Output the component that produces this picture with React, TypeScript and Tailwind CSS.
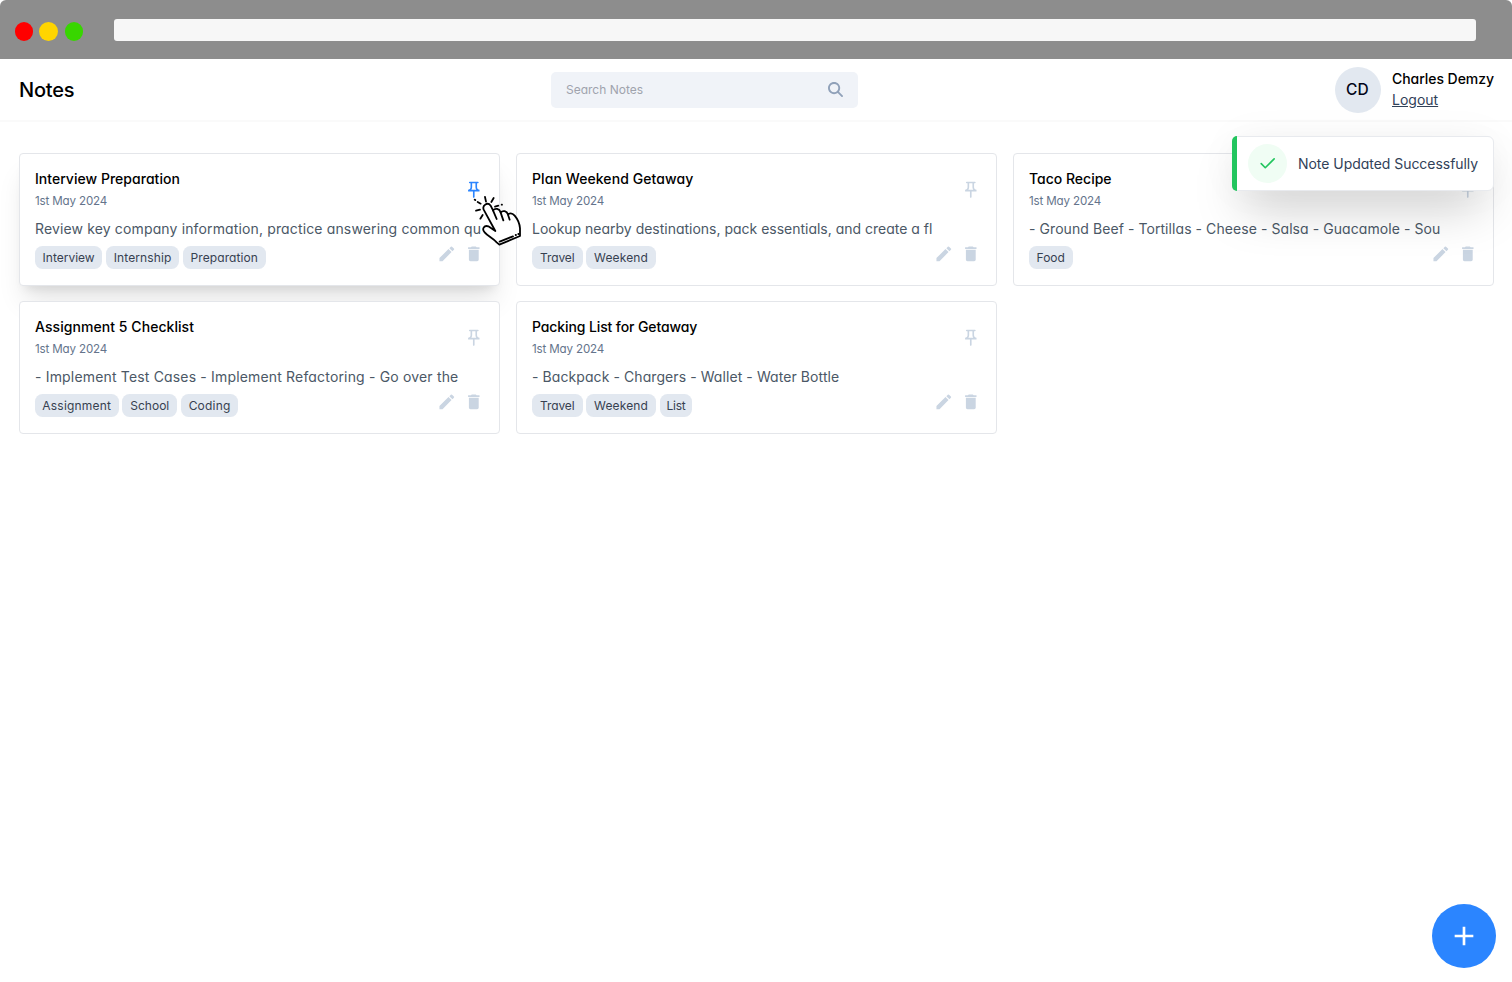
import { MdAdd, MdCreate, MdDelete, MdOutlinePushPin } from "react-icons/md";
import { FaMagnifyingGlass } from "react-icons/fa6";
import { LuCheck } from "react-icons/lu";

type Tag = { label: string; box: string };
type Note = {
  title: string;
  titleTracking: string;
  content: string;
  contentTracking: string;
  tags: Tag[];
  pinned?: boolean;
};

const travel: Tag = { label: "Travel", box: "w-[50.5px] tracking-[-0.1px]" };
const weekend: Tag = { label: "Weekend", box: "w-[69.5px] tracking-[0.15px]" };

const notes: Note[] = [
  {
    title: "Interview Preparation",
    titleTracking: "tracking-[0.03px]",
    content: "Review key company information, practice answering common qu",
    contentTracking: "tracking-[0.14px]",
    pinned: true,
    tags: [
      { label: "Interview", box: "w-[67.3px]" },
      { label: "Internship", box: "w-[73px] tracking-[0.13px]" },
      { label: "Preparation", box: "w-[82.8px] tracking-[0.1px]" },
    ],
  },
  {
    title: "Plan Weekend Getaway",
    titleTracking: "tracking-[0.08px]",
    content: "Lookup nearby destinations, pack essentials, and create a fl",
    contentTracking: "tracking-[-0.01px]",
    tags: [travel, weekend],
  },
  {
    title: "Taco Recipe",
    titleTracking: "tracking-[0px]",
    content: "- Ground Beef - Tortillas - Cheese - Salsa - Guacamole - Sou",
    contentTracking: "tracking-[0.07px]",
    tags: [{ label: "Food", box: "w-[43.5px]" }],
  },
  {
    title: "Assignment 5 Checklist",
    titleTracking: "tracking-[0.06px]",
    content: "- Implement Test Cases - Implement Refactoring - Go over the",
    contentTracking: "tracking-[0.17px]",
    tags: [
      { label: "Assignment", box: "w-[83.5px] tracking-[0.2px]" },
      { label: "School", box: "w-[55px]" },
      { label: "Coding", box: "w-[57px] tracking-[0.2px]" },
    ],
  },
  {
    title: "Packing List for Getaway",
    titleTracking: "tracking-[-0.11px]",
    content: "- Backpack - Chargers - Wallet - Water Bottle",
    contentTracking: "tracking-[0.08px]",
    tags: [travel, weekend, { label: "List", box: "w-[32.7px] tracking-[-0.3px]" }],
  },
];

function NoteCard({ note }: { note: Note }) {
  return (
    <article
      className={`h-[132.5px] rounded border border-[#e4e6ea] bg-white pt-[15px] pl-[15px] ${
        note.pinned
          ? "pr-[15.5px] shadow-[0_20px_25px_-5px_rgba(0,0,0,0.1),0_8px_10px_-6px_rgba(0,0,0,0.1)]"
          : "pr-[15.1px]"
      }`}
    >
      <div className="flex items-center justify-between">
        <div>
          <h6 className={`text-[14px] leading-[20px] font-medium text-black ${note.titleTracking}`}>{note.title}</h6>
          <p className="mt-[3px] text-[11.6px] leading-[18px] tracking-[-0.15px] text-[#64748b]">1st May 2024</p>
        </div>
        <MdOutlinePushPin className={`size-[19.6px] ${note.pinned ? "text-[#2b85ff]" : "text-slate-300"}`} />
      </div>
      <p className={`mt-[9px] text-[14px] leading-[20px] whitespace-nowrap text-[#4b5866] ${note.contentTracking}`}>
        {note.content}
      </p>
      <div className="mt-[7px] flex items-start justify-between">
        <div className="flex gap-[3.8px]">
          {note.tags.map((tag) => (
            <span
              key={tag.label}
              className={`flex h-[23px] items-center justify-center rounded-[7.5px] bg-slate-200 text-[12px] text-[#374151] ${tag.box}`}
            >
              {tag.label}
            </span>
          ))}
        </div>
        <div className="-mt-[2.5px] flex gap-[7.7px] text-slate-300">
          <MdCreate className="size-[19.6px]" />
          <MdDelete className="size-[19.6px]" />
        </div>
      </div>
    </article>
  );
}

function HandCursor() {
  return (
    <svg
      viewBox="0 0 210 225"
      className="pointer-events-none absolute top-[175px] left-[460px] h-[75px] w-[70px]"
      fill="none"
      stroke="#000"
      strokeWidth="5.4"
      strokeLinecap="round"
      strokeLinejoin="round"
    >
      <path
        fill="#fff"
        d="M106 168 L71 104 C66 90 83 80 92 92 L99 106 C106 98 118 101 122 112 C129 105 140 108 144 118 C151 113 159 116 164 122 C176 136 179 148 180 160 L180 183 L118 209 L110 202 C98 189 84 184 74 172 C64 161 73 150 85 154 Z"
      />
      <path d="M99 106 L110 132 M122 113 L130 136 M144 119 L149 134" />
      <path d="M119 200 L159 184 M167 180 L168 180 M175 177 L176 177" />
      <path d="M75 66 L78 80 M101 69 L94 81 M105 95 L115 92 M125 89 L126 89 M48 107 L60 104 M61 131 L68 120 M44 74 L46 75 M53 81 L62 86" />
    </svg>
  );
}

export default function App() {
  return (
    <div className="relative flex h-[982px] w-[1512px] flex-col overflow-hidden bg-white font-['Inter',sans-serif] [font-feature-settings:'cv11']">
      <div className="flex h-[59px] shrink-0 items-start rounded-t-[6px] bg-[#8d8d8d] pl-[14.9px]">
        <div className="mt-[22px] flex">
          <span className="size-[18.6px] rounded-full bg-[#ff0000]" />
          <span className="ml-[5.7px] size-[18.6px] rounded-full bg-[#ffd500]" />
          <span className="ml-[6.9px] size-[18.6px] rounded-full bg-[#38d600]" />
        </div>
        <div className="mt-[18.5px] ml-[30.7px] h-[22px] w-[1362.5px] rounded-[3px] bg-[#f7f7f7]" />
      </div>

      <header className="flex h-[63px] shrink-0 items-center border-b-2 border-[#fafafa] pr-[18px] pl-[19px]">
        <h2 className="w-[532px] text-[20px] font-medium tracking-[-0.2px] text-black">Notes</h2>
        <div className="flex h-[36px] w-[307px] items-center justify-between rounded-[5px] bg-[#f0f3f8] pr-[15px] pl-[15px]">
          <span className="text-[12px] text-[#9fa3ad]">Search Notes</span>
          <FaMagnifyingGlass className="size-[15px] text-slate-400" />
        </div>
        <div className="ml-auto flex items-center gap-[11.5px]">
          <div className="flex size-[46px] items-center justify-center rounded-full bg-slate-200 text-[15.5px] font-medium tracking-[0.3px] text-slate-950">
            CD
          </div>
          <div className="-mt-[2px] w-[102px]">
            <p className="text-[14px] leading-[21px] font-medium tracking-[-0.05px] whitespace-nowrap text-black">
              Charles Demzy
            </p>
            <button className="block text-[14px] leading-[21px] text-slate-700 underline">Logout</button>
          </div>
        </div>
      </header>

      <main className="grid grid-cols-3 gap-x-4 gap-y-[15.5px] pt-[31px] pr-[18px] pl-[19px]">
        {notes.map((note) => (
          <NoteCard key={note.title} note={note} />
        ))}
      </main>

      <div className="absolute top-[136px] left-[1232px] flex h-[55px] w-[262px] items-center rounded-md border border-[#e8eaee] bg-white shadow-[0_25px_50px_-12px_rgba(0,0,0,0.25),0_0_40px_rgba(0,0,0,0.04)]">
        <div className="-ml-px h-[55px] w-[5px] shrink-0 rounded-l-[5px] bg-[#22c55e]" />
        <div className="ml-[11px] flex size-[38.5px] shrink-0 items-center justify-center rounded-full bg-green-50">
          <LuCheck className="size-[19.4px] text-[#22c55e]" />
        </div>
        <p className="ml-[11.5px] text-[14px] tracking-[-0.04px] whitespace-nowrap text-slate-700">
          Note Updated Successfully
        </p>
      </div>

      <button className="absolute top-[904px] left-[1432px] flex size-16 items-center justify-center rounded-full bg-[#2b85ff]">
        <MdAdd className="size-[32px] text-white" />
      </button>

      <HandCursor />
    </div>
  );
}
